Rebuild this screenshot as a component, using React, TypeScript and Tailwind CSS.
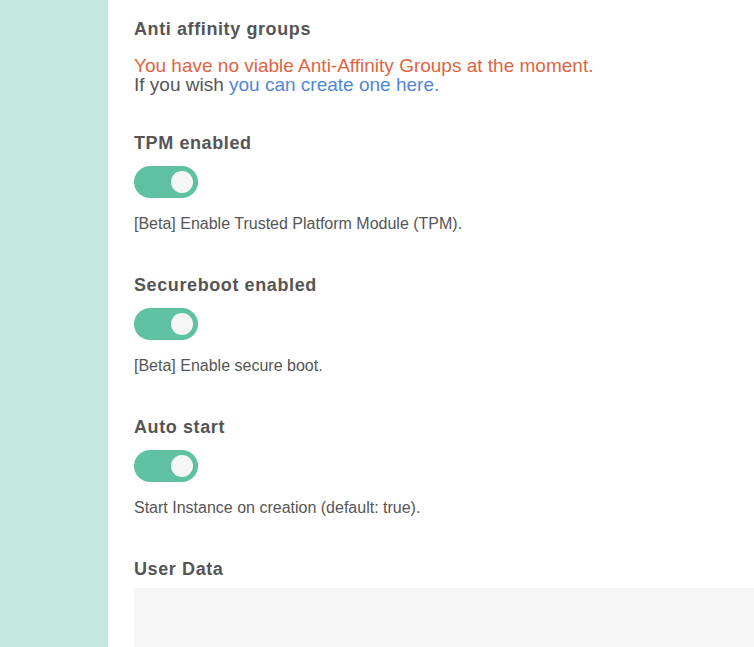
import React from 'react';

const Toggle: React.FC = () => (
    <div className="w-[64px] h-[32px] rounded-full bg-[#5fc1a1] flex items-center justify-end pr-[5px]">
        <div className="w-[22px] h-[22px] rounded-full bg-[#f5f5f5]" />
    </div>
);

const ToggleSection: React.FC<{ title: string; hint: string }> = ({ title, hint }) => (
    <div className="mb-[39px]">
        <h3 className="text-[18px] leading-[24px] font-bold text-[#555] tracking-[0.6px]">{title}</h3>
        <div className="mt-[11px]">
            <Toggle />
        </div>
        <p className="mt-[16px] text-[16px] leading-[20px] text-[#555]">{hint}</p>
    </div>
);

export default function App() {
    return (
        <div className="flex w-[754px] h-[647px] overflow-hidden bg-white" style={{ fontFamily: '"Liberation Sans", Arial, sans-serif' }}>
            <div className="w-[108px] shrink-0 bg-[#c5e7de]" />
            <div className="flex-1 pl-[26px] pt-[17px]">
                <div className="mb-[37px]">
                    <h3 className="text-[18px] leading-[24px] font-bold text-[#555] tracking-[0.6px]">Anti affinity groups</h3>
                    <p className="mt-[15px] text-[19px] leading-[19px] text-[#e2643f]">
                        You have no viable Anti-Affinity Groups at the moment.
                    </p>
                    <p className="text-[19px] leading-[19px] text-[#555]">
                        If you wish <a className="text-[#4f87d8]">you can create one here.</a>
                    </p>
                </div>
                <ToggleSection title="TPM enabled" hint="[Beta] Enable Trusted Platform Module (TPM)." />
                <ToggleSection title="Secureboot enabled" hint="[Beta] Enable secure boot." />
                <ToggleSection title="Auto start" hint="Start Instance on creation (default: true)." />
                <div>
                    <h3 className="text-[18px] leading-[24px] font-bold text-[#555] tracking-[0.6px]">User Data</h3>
                    <div className="mt-[7px] h-[80px] bg-[#f6f6f6]" />
                </div>
            </div>
        </div>
    );
}
